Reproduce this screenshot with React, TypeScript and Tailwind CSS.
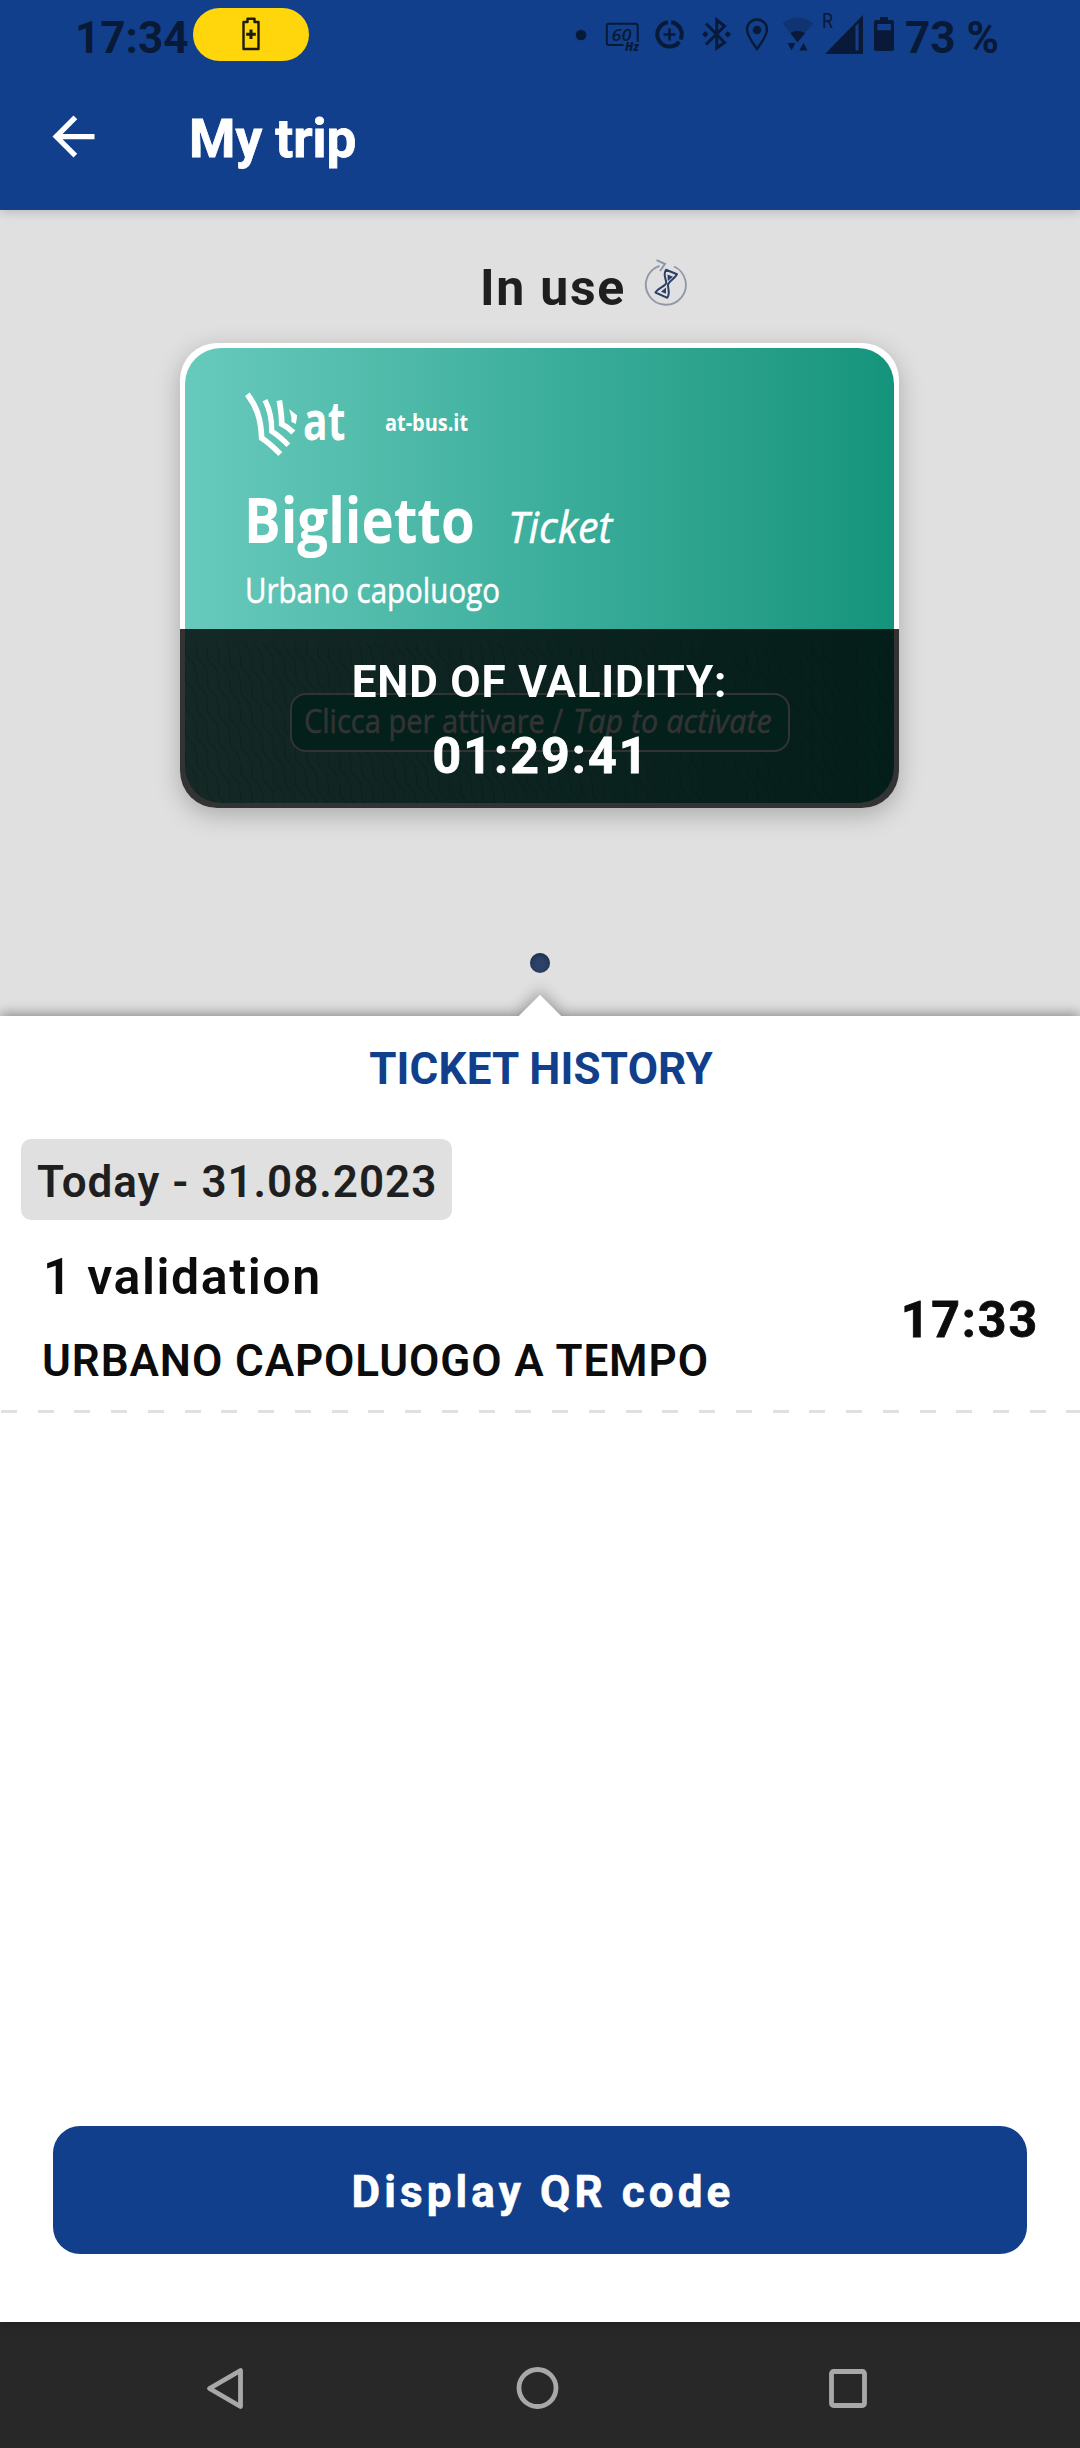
import type { ReactNode } from 'react';

const INK = '#081a37';

/* Full-height slice of the status bar; the viewBox keeps screen coordinates. */
function StatusSlice({ x, w, children }: { x: number; w: number; children: ReactNode }) {
  return (
    <svg width={w} height={74} viewBox={`${x} 0 ${w} 74`} className="block shrink-0" fill={INK}>
      {children}
    </svg>
  );
}

function StatusBar() {
  return (
    <div className="flex h-[74px] w-full items-start pl-[75px] text-[44px] leading-[76px] font-bold text-[#081a37]">
      <span className="w-[118px]">17:34</span>
      <div className="mt-2 flex h-[53px] w-[116px] items-center justify-center rounded-full bg-[#ffd60c]">
        <svg width="20" height="36" viewBox="0 0 20 36" fill="none" stroke="#1c1a08" className="mb-0.5">
          <path d="M2.500 6H6.500V2.800h7V6h4v27H2.500Z" strokeWidth="2.400" strokeLinejoin="round" />
          <path d="M10 13.500v9.500M5.200 18.200h9.600" strokeWidth="3" />
        </svg>
      </div>
      <div className="ml-[261px] flex">
        <StatusSlice x={570} w={30}>
          <circle cx="581" cy="35" r="5.300" />
        </StatusSlice>
        <StatusSlice x={600} w={48}>
          <path d="M623.500 45H609a2.200 2.200 0 0 1-2.200-2.200V26a2.200 2.200 0 0 1 2.200-2.200h26.500a2.200 2.200 0 0 1 2.200 2.200V42" fill="none" stroke={INK} strokeWidth="2" />
          <text x="611.500" y="40.500" fontSize="17" fontStyle="italic" fontWeight="600" fontFamily="Open Sans, sans-serif" textLength="20" lengthAdjust="spacingAndGlyphs">60</text>
          <text x="625" y="50.500" fontSize="11.500" fontStyle="italic" fontWeight="800" fontFamily="Open Sans, sans-serif" textLength="14" lengthAdjust="spacingAndGlyphs">Hz</text>
        </StatusSlice>
        <StatusSlice x={648} w={46}>
          <path d="M668 22.300A12.200 12.200 0 1 0 679.300 41.700M671.200 22.300A12.200 12.200 0 0 1 680.600 39.500" fill="none" stroke={INK} strokeWidth="4" />
          <path d="M669.500 28.500v12M663.500 34.500h12" stroke={INK} strokeWidth="2.600" />
        </StatusSlice>
        <StatusSlice x={694} w={44}>
          <path d="M706 23.500 724.500 42.500 716.800 48V20L724.500 26.200 706 44.500" fill="none" stroke={INK} strokeWidth="3" />
          <path d="M705.300 31l3.200 3.300-3.200 3.300-3.200-3.300ZM727.800 31l3.200 3.300-3.200 3.300-3.200-3.300Z" />
        </StatusSlice>
        <StatusSlice x={738} w={38}>
          <path d="M757 49C752 42 747 35.500 747 29.500a10 10 0 0 1 20 0C767 35.500 762 42 757 49Z" fill="none" stroke={INK} strokeWidth="2.400" />
          <circle cx="757" cy="30" r="4.300" />
        </StatusSlice>
        <StatusSlice x={776} w={44}>
          <path d="M782.500 23.500C791 15.500 804.500 15.500 813 23.500L797.500 42Z" fill="#103471" />
          <path d="M790.500 33.200C794.500 30.300 800.500 30.300 805 33.200L797.500 42.300Z" />
          <path d="M787.500 43h8l-4 7.500ZM799.500 50.500h8l-4-7.500Z" />
        </StatusSlice>
        <StatusSlice x={820} w={48}>
          <text x="822" y="28" fontSize="20.500" fontWeight="400" fontFamily="Roboto, sans-serif" textLength="11" lengthAdjust="spacingAndGlyphs">R</text>
          <path fillRule="evenodd" d="M825 54 863 15V54ZM855.500 26V50.500H858.500V23Z" />
        </StatusSlice>
        <StatusSlice x={868} w={37}>
          <path fillRule="evenodd" d="M880 20v-3h8v3h4a2 2 0 0 1 2 2v27a2 2 0 0 1-2 2h-16a2 2 0 0 1-2-2V22a2 2 0 0 1 2-2ZM877.300 24v6.300h13.600V24Z" />
        </StatusSlice>
      </div>
      <span className="whitespace-pre">73 %</span>
    </div>
  );
}

function InUseIcon() {
  return (
    <svg width="44" height="48" viewBox="644 259 44 48" fill="none" className="block">
      <path d="M659.500 266.800A20 20 0 1 0 674 267.500" stroke="#9097a8" strokeWidth="1.800" />
      <path d="M656.500 261.200 665 265 660 272" stroke="#9097a8" strokeWidth="2" />
      <path d="M666 270.800 677 275.300C674 280.500 668.500 282.500 668 286 667.800 290 670.500 294 667.300 298.800L655.500 293.500C658 288.500 665.500 287.500 666.200 284 666.500 280 662.500 276.500 666 270.800Z" stroke="#2b4069" strokeWidth="2" strokeLinejoin="round" />
      <path d="M667.500 275.500 673 277.800 667.800 282ZM666 288.500 661 292.800 666 294.800Z" fill="#2b4069" />
    </svg>
  );
}

function AtLogo() {
  return (
    <svg width="53" height="66" viewBox="225 180 159 202" fill="none" stroke="white" preserveAspectRatio="none" className="block">
      <path d="M232 190C258 225 273 262 275 324C296 337 314 356 331 373" strokeWidth="17" />
      <path d="M285 208C300 238 306 270 305 303C324 315 340 330 355 346" strokeWidth="16" />
      <path d="M328 209C332 235 336 260 335 281C349 288 360 297 370 307" strokeWidth="17" />
      <path d="M357 236C366 243 373 248 381 254C381 264 379 273 377 281L364 274C366 262 362 250 357 236Z" fill="white" stroke="none" />
    </svg>
  );
}

function TicketCard() {
  return (
    <div className="relative ml-[180px] h-[465px] w-[719px] overflow-hidden rounded-[37px] bg-white p-[5px]">
      <div className="relative h-full overflow-hidden rounded-[36px] bg-linear-to-r from-[#67cabc] via-[#3bae9b] via-52% to-[#14947c] pt-[43px] pl-[60px] font-['Open_Sans',sans-serif] text-white">
        <div className="flex h-[66px]">
          <AtLogo />
          <span className="ml-[5px] w-[82px] origin-left scale-x-[.77] pt-px text-[53px] leading-[56px] font-bold">at</span>
          <span className="origin-left scale-x-[.83] pt-[13px] text-[24px] leading-[36px] font-bold whitespace-nowrap">at-bus.it</span>
        </div>
        <div className="mt-[21px] flex h-[84px]">
          <span className="-ml-[1px] w-[264px] origin-left scale-x-[.88] text-[62px] leading-[82px] font-bold">Biglietto</span>
          <span className="origin-left scale-x-[.95] pt-[7px] text-[43.5px] leading-[83px] italic [-webkit-text-stroke:0.5px_white]">Ticket</span>
        </div>
        <span className="mt-px block origin-left scale-x-[.843] text-[35px] leading-[54px] whitespace-nowrap [-webkit-text-stroke:0.5px_white]">Urbano capoluogo</span>
        <svg className="absolute top-[295px] left-0" width="709" height="160">
          <defs>
            <pattern id="waves" width="11" height="27" patternUnits="userSpaceOnUse" patternTransform="skewY(12)">
              <path d="M.5-1V9C1 17 11 14 11.500 28" fill="none" stroke="#00604e" strokeOpacity=".28" strokeWidth="1.200" />
            </pattern>
          </defs>
          <rect width="709" height="160" fill="url(#waves)" />
        </svg>
        <div className="absolute top-[345px] left-[105px] flex h-[59px] w-[500px] rounded-[16px] border-2 border-white bg-[#10a085] pl-[12px] text-[33px] leading-[51px] whitespace-nowrap [-webkit-text-stroke:0.4px_white]">
          <span className="w-[269px] origin-left scale-x-[.88]">Clicca per attivare /</span>
          <span className="origin-left scale-x-[.925] italic">Tap to activate</span>
        </div>
      </div>
      <div className="absolute inset-x-0 bottom-0 flex h-[179px] flex-col items-center bg-black/80 pt-[26px] text-white">
        <span className="text-[44px] leading-[54px] font-bold tracking-[0.84px]">END OF VALIDITY:</span>
        <span className="mt-[17px] ml-[3px] text-[50px] leading-[60px] font-bold tracking-[2.1px] [-webkit-text-stroke:0.8px_white]">01:29:41</span>
      </div>
    </div>
  );
}

function NavigationBar() {
  return (
    <div className="flex h-[126px] shrink-0 items-center bg-[#282828] pt-[6px]">
      <svg width="1080" height="60" viewBox="0 2358 1080 60" fill="none" stroke="#a8a8a8" strokeWidth="4.800" strokeLinejoin="round">
        <path d="M240.500 2370.500V2406.500L209.500 2388.500Z" />
        <circle cx="537.500" cy="2388" r="18.500" />
        <rect x="831.500" y="2371.500" width="33" height="34" rx="2" />
      </svg>
    </div>
  );
}

export default function App() {
  return (
    <div className="flex h-[2448px] w-[1080px] flex-col overflow-hidden bg-white font-[Roboto,sans-serif]">
      <header className="relative z-10 h-[210px] shrink-0 bg-[#123f8b] shadow-[0_2px_10px_rgba(0,0,0,0.18)]">
        <StatusBar />
        <div className="flex items-start pt-[31px] pl-[42px]">
          <svg width="63" height="63" viewBox="0 0 24 24" fill="white">
            <path d="M20 11H7.830l5.590-5.590L12 4l-8 8 8 8 1.410-1.410L7.830 13H20v-2z" />
          </svg>
          <h1 className="ml-[84px] pt-[3px] text-[53px] leading-[63px] font-bold text-white [-webkit-text-stroke:0.8px_white]">My trip</h1>
        </div>
      </header>

      <section className="h-[806px] shrink-0 bg-[#e0e0e0]">
        <div className="flex h-[133px] pt-[48px] pl-[480px]">
          <span className="w-[164px] text-[50px] leading-[60px] font-bold tracking-[1.7px] text-[#1f1f1f]">In use</span>
          <InUseIcon />
        </div>
        <div className="w-[899px] drop-shadow-[0_7px_12px_rgba(0,0,0,0.24)]">
          <TicketCard />
        </div>
        <div className="mx-auto mt-[145px] h-5 w-5 rounded-full bg-[#2d4169] shadow-[inset_0_2px_5px_rgba(0,0,0,0.35)]" />
      </section>

      <main className="relative flex grow flex-col bg-white shadow-[0_-2px_12px_rgba(0,0,0,0.4)]">
        <div className="absolute -top-[15px] left-[525px] h-[30px] w-[30px] rotate-45 bg-white shadow-[-4px_-4px_14px_rgba(0,0,0,0.25)]" />
        <div className="relative flex grow flex-col bg-white [clip-path:inset(0)]">
          <h2 className="pt-[27px] pl-[2px] text-center text-[44px] leading-[52px] font-bold tracking-[0.15px] text-[#123f8b]">TICKET HISTORY</h2>
          <div className="mt-[44px] ml-[21px] flex h-[81px] w-[431px] items-center rounded-[10px] bg-[#e0e0e0] pt-[4px] pl-[16px] text-[44px] leading-[52px] font-semibold tracking-[0.98px] whitespace-nowrap text-[#1f1f1f]">Today - 31.08.2023</div>
          <div className="flex items-center justify-between pr-[41px] pl-[42px] text-[#0c0c0c]">
            <div className="flex flex-col pt-[27px]">
              <span className="pl-px text-[50px] leading-[60px] font-semibold tracking-[1.6px]">1 validation</span>
              <span className="mt-[28px] text-[44px] leading-[52px] font-semibold tracking-[0.92px] whitespace-nowrap">URBANO CAPOLUOGO A TEMPO</span>
            </div>
            <span className="pt-[32px] text-[50px] leading-[60px] font-bold tracking-[1.9px] [-webkit-text-stroke:0.8px_#0c0c0c]">17:33</span>
          </div>
          <div className="mt-[23px] ml-[1px] h-[3px] bg-[repeating-linear-gradient(90deg,#e0e0e0_0_16px,transparent_16px_36.74px)]" />
          <button className="mx-[53px] mt-auto mb-[68px] h-[128px] rounded-[27px] bg-[#123f8b] pt-[3px] pl-[6px] text-center text-[44px] leading-[52px] font-bold tracking-[4.1px] text-white [-webkit-text-stroke:0.6px_white]">Display QR code</button>
        </div>
      </main>
      <NavigationBar />
    </div>
  );
}
